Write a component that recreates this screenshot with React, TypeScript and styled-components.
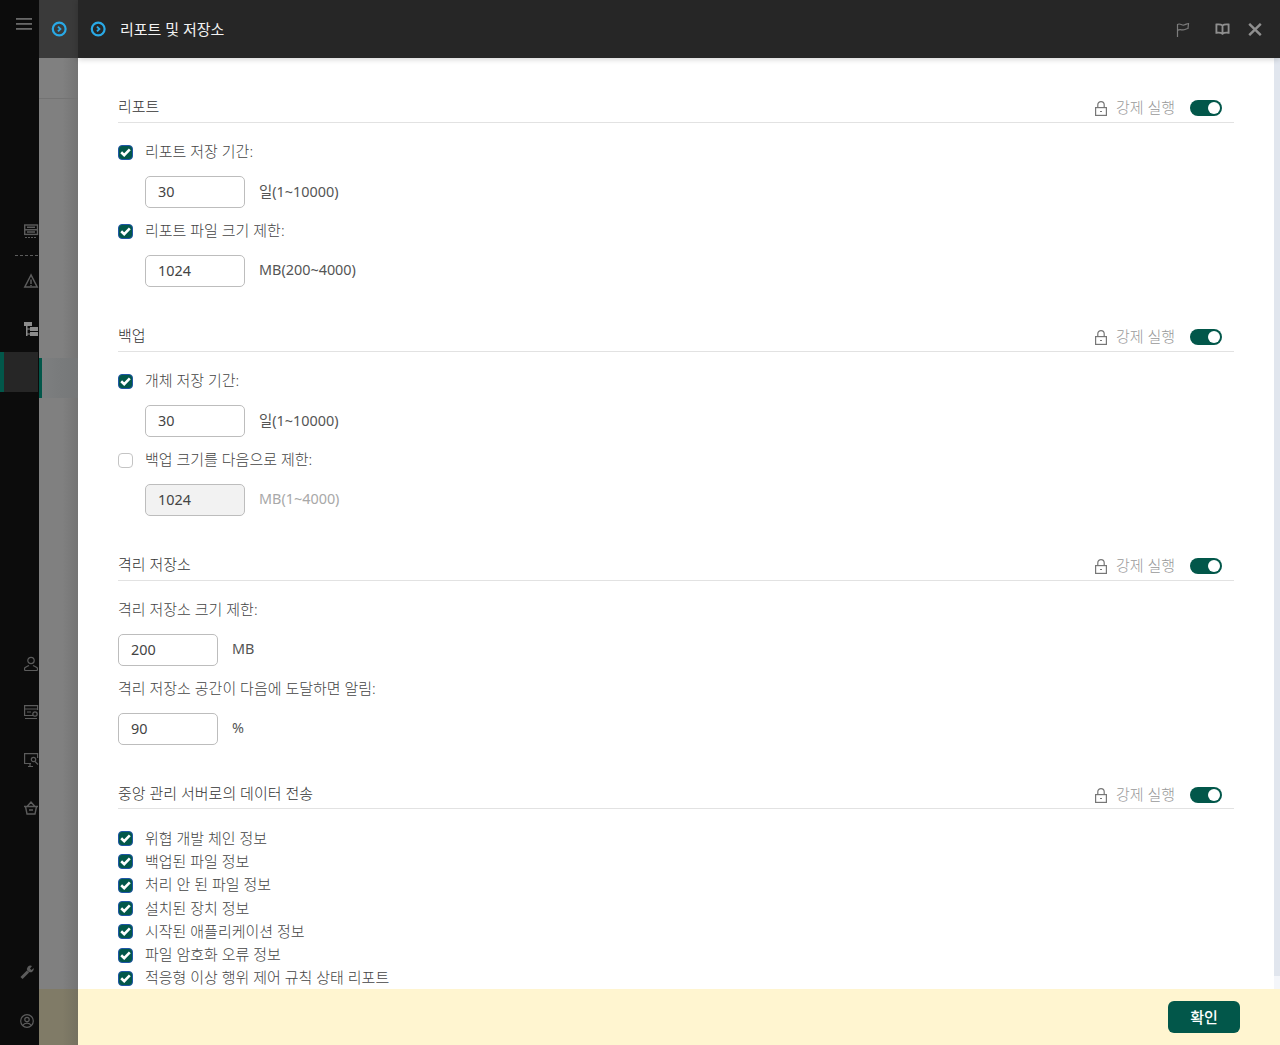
// App.tsx
import React from "react";
import styled, { createGlobalStyle } from "styled-components";

const GlobalStyle = createGlobalStyle`
  html, body {
    margin: 0;
    padding: 0;
    height: 100%;
    overflow: hidden;
    background: #0d0d0d;
  }
  body {
    font-family: "Noto Sans", "Noto Sans CJK KR", sans-serif;
    font-size: 15px;
  }
`;

const Page = styled.div`
  display: flex;
  width: 1280px;
  height: 1045px;
  overflow: hidden;
`;

/* left rail */
const Rail = styled.nav`
  width: 39px;
  flex: none;
  display: flex;
  flex-direction: column;
  background: #0c0c0c;
  color: #5c5c5c;
`;

const RailTop = styled.div`
  height: 48px;
  padding-left: 16px;
  display: flex;
  align-items: center;
  color: #686868;
`;

const RailGroup = styled.div<{ $top: number }>`
  display: flex;
  flex-direction: column;
  margin-top: ${(p) => p.$top}px;
  gap: 8px;
`;

const RailItem = styled.div<{ $active?: boolean; $left?: number }>`
  height: 40px;
  box-sizing: border-box;
  padding-left: ${(p) => p.$left ?? 24}px;
  margin-top: ${(p) => (p.$active ? -5 : 0)}px;
  display: flex;
  align-items: center;
  background: ${(p) => (p.$active ? "#262626" : "transparent")};
  border-left: ${(p) => (p.$active ? "4px solid #02574a" : "none")};
  width: ${(p) => (p.$active ? 38 : 39)}px;
`;

const RailDivider = styled.div`
  width: 23px;
  margin: -3px 0 -3px 15px;
  border-top: 1px dashed #5c5c5c;
`;

const RailBottom = styled(RailGroup)`
  margin-top: auto;
  padding-bottom: 4px;
  gap: 9px;
`;

/* dimmed panel behind the drawer */
const Underlay = styled.div`
  width: 39px;
  flex: none;
  display: flex;
  flex-direction: column;
  background: linear-gradient(to right, #808080 0, #808080 60%, #747474 100%);
`;

const UnderlayHead = styled.div`
  height: 58px;
  flex: none;
  display: flex;
  align-items: center;
  justify-content: center;
  background: #3a3a3a;
`;

const UnderlayRow = styled.div`
  height: 41px;
  flex: none;
  box-sizing: border-box;
  border-bottom: 1px solid #737373;
`;

const UnderlayActive = styled.div`
  height: 40px;
  flex: none;
  margin-top: 259px;
  background: linear-gradient(to right, #7d7f80, #757778);
  border-left: 3px solid #02574a;
`;

const UnderlayFoot = styled.div`
  height: 56px;
  flex: none;
  margin-top: auto;
  background: linear-gradient(to right, #807b67 0, #807b67 60%, #757160 100%);
`;

/* drawer */
const Drawer = styled.main`
  flex: 1;
  min-width: 0;
  display: flex;
  flex-direction: column;
  background: #fff;
`;

const DrawerHead = styled.header`
  height: 58px;
  flex: none;
  display: flex;
  align-items: center;
  padding: 0 18px 0 12px;
  background: #262626;
  box-shadow: 0 1px 6px rgba(0, 0, 0, 0.2);
  position: relative;
  z-index: 1;
`;

const DrawerTitle = styled.h1`
  margin: 0 0 0 14px;
  padding-bottom: 1px;
  font-size: 15px;
  font-weight: 400;
  color: #f2f2f2;
`;

const HeadIcons = styled.div`
  margin-left: auto;
  display: flex;
  align-items: center;
  color: #8f8f8f;
`;

const HeadIcon = styled.span<{ $gap: number; $dim?: boolean }>`
  display: flex;
  margin-left: ${(p) => p.$gap}px;
  color: ${(p) => (p.$dim ? "#7c7c7c" : "inherit")};
`;

const ScrollArea = styled.div`
  flex: 1;
  min-height: 0;
  position: relative;
  overflow: hidden;
  padding: 32px 46px 0 40px;
`;

const ScrollThumb = styled.div`
  position: absolute;
  top: 0;
  right: 0;
  bottom: 0;
  width: 6px;
  background: #f4f6fa;

  &::before {
    content: "";
    display: block;
    height: 918px;
    background: #e1e6ee;
  }
`;

const Section = styled.section`
  margin-bottom: 32px;
`;

const SectionHead = styled.div<{ $short?: boolean }>`
  height: ${(p) => (p.$short ? 32 : 33)}px;
  box-sizing: border-box;
  display: flex;
  align-items: flex-start;
  padding: 7px 12px 0 0;
  border-bottom: 1px solid #e2e2e2;
`;

const SectionTitle = styled.h2`
  margin: 0;
  font-size: 15px;
  line-height: 18px;
  font-weight: 300;
  color: #333;
`;

const Enforce = styled.div`
  margin: 1px 0 0 auto;
  display: flex;
  align-items: center;
  height: 20px;
  color: #999;
  font-weight: 300;
`;

const EnforceText = styled.span`
  margin: 0 15px 0 9px;
  padding-bottom: 3px;
`;

const Toggle = styled.span`
  width: 32px;
  height: 16px;
  border-radius: 8px;
  background: #02574a;
  position: relative;

  &::after {
    content: "";
    position: absolute;
    top: 2px;
    right: 2px;
    width: 12px;
    height: 12px;
    border-radius: 50%;
    background: #fff;
  }
`;

const Body = styled.div`
  padding-top: 19px;
`;

const Row = styled.div`
  height: 20px;
  display: flex;
  align-items: center;
  color: #444;
`;

const RowText = styled.span`
  padding-bottom: 3px;
  font-weight: 300;
`;

const Check = styled.span<{ $on?: boolean }>`
  width: 15px;
  height: 15px;
  flex: none;
  margin-right: 12px;
  box-sizing: border-box;
  border-radius: 4px;
  display: flex;
  align-items: center;
  justify-content: center;
  background: ${(p) => (p.$on ? "#02574a" : "#fff")};
  border: 1px solid ${(p) => (p.$on ? "#2056a8" : "#c4c4c4")};
`;

const FieldRow = styled.div<{ $indent?: boolean }>`
  display: flex;
  align-items: center;
  margin: 14px 0 13px;
  padding-left: ${(p) => (p.$indent ? 27 : 0)}px;

  &:last-child {
    margin-bottom: 0;
  }
`;

const Field = styled.div<{ $disabled?: boolean }>`
  width: 100px;
  height: 32px;
  box-sizing: border-box;
  padding: 0 0 2px 12px;
  border: 1px solid #bdbdbd;
  border-radius: 5px;
  display: flex;
  align-items: center;
  font-size: 14.4px;
  color: #444;
  background: ${(p) => (p.$disabled ? "#f2f2f2" : "#fff")};
`;

const Unit = styled.span<{ $disabled?: boolean }>`
  margin-left: 14px;
  padding-bottom: 4px;
  font-size: 14.4px;
  color: ${(p) => (p.$disabled ? "#a8a8a8" : "#555")};
`;

const List = styled.div`
  padding-top: 18px;
`;

const ListRow = styled.div`
  height: 23.3px;
  display: flex;
  align-items: center;
  color: #444;
`;

const Footer = styled.footer`
  height: 56px;
  flex: none;
  display: flex;
  align-items: center;
  justify-content: flex-end;
  padding-right: 40px;
  background: #fff5d0;
`;

const Confirm = styled.button`
  width: 72px;
  height: 32px;
  padding: 0 0 2px;
  border: none;
  border-radius: 6px;
  background: #02574a;
  color: #fff;
  font: inherit;
  font-weight: 500;
`;

const Tick = () => (
  <svg width="11" height="9" viewBox="0 0 11 9">
    <path d="M1.2 4.300 4.200 7.200 9.800 1.400" fill="none" stroke="#fff" strokeWidth="2.600" />
  </svg>
);

const CircleChevron = () => (
  <svg width="16" height="16" viewBox="0 0 16 16" fill="none" stroke="#29a9e6">
    <circle cx="8.200" cy="8" r="6.400" strokeWidth="2.200" />
    <path d="M7 5.600 9.400 8 7 10.400" strokeWidth="1.900" />
  </svg>
);

const LockIcon = () => (
  <svg width="12" height="15" viewBox="0 0 12 15" fill="none" stroke="#777" strokeWidth="1.200">
    <rect x="0.600" y="6.600" width="10.800" height="7.800" />
    <path d="M2.800 6.600V3.800a3.200 3.200 0 0 1 6.400 0V6.600" />
    <path d="M5 10.500h2" />
  </svg>
);

const Flag = () => (
  <svg width="14" height="15" viewBox="0 0 14 15" fill="none" stroke="currentColor" strokeWidth="1.200">
    <path d="M1.500 15V2.500C4 .8 5.500 3.500 8 3c2-.4 3-1.500 4.500-1.500L12 6.500c-2 .2-3 1.300-5 1.400C5 8 3.500 7 1.500 8.500" />
  </svg>
);

const Book = () => (
  <svg width="15" height="12" viewBox="0 0 16 12" fill="none" stroke="currentColor" strokeWidth="2">
    <path d="M8 2.200C6.500 1 4 .9 1.500 1.200V10c2.500-.3 5-.2 6.500 1 1.500-1.200 4-1.300 6.500-1V1.200C12 .9 9.500 1 8 2.200Zm0 0V11" />
  </svg>
);

const Close = () => (
  <svg width="14" height="13" viewBox="0 0 14 13" stroke="currentColor" strokeWidth="2.400">
    <path d="M1.200 .8 12.800 12.200M12.800 .8 1.200 12.200" />
  </svg>
);

const Burger = () => (
  <svg width="16" height="12" viewBox="0 0 16 12" fill="currentColor">
    <rect y="0" width="16" height="1.800" />
    <rect y="5" width="16" height="1.800" />
    <rect y="10" width="16" height="1.800" />
  </svg>
);

const RailSvg = ({ children }: { children: React.ReactNode }) => (
  <svg width="14" height="16" viewBox="0 0 14 16" fill="none" stroke="currentColor" strokeWidth="1.200" overflow="visible">
    {children}
  </svg>
);

const Enforced = () => (
  <Enforce>
    <LockIcon />
    <EnforceText>강제 실행</EnforceText>
    <Toggle />
  </Enforce>
);

const CheckRow = ({ on = true, children }: { on?: boolean; children: React.ReactNode }) => (
  <Row>
    <Check $on={on}>{on && <Tick />}</Check>
    <RowText>{children}</RowText>
  </Row>
);

const dataItems = [
  "위협 개발 체인 정보",
  "백업된 파일 정보",
  "처리 안 된 파일 정보",
  "설치된 장치 정보",
  "시작된 애플리케이션 정보",
  "파일 암호화 오류 정보",
  "적응형 이상 행위 제어 규칙 상태 리포트",
];

export default function App() {
  return (
    <Page>
      <GlobalStyle />
      <Rail>
        <RailTop>
          <Burger />
        </RailTop>
        <RailGroup $top={162}>
          <RailItem>
            <RailSvg>
              <rect x="0.700" y="3" width="12.800" height="9.400" strokeWidth="1.400" />
              <path d="M.7 7.700h12.800M3 5.300h8M3 10h8" strokeWidth="1.400" />
              <path d="M1 15.500h12" strokeDasharray="2 1" />
            </RailSvg>
          </RailItem>
          <RailDivider />
          <RailItem>
            <RailSvg>
              <path d="M7 2 .8 14h12.400ZM7 6.500V11M7 12v1" strokeWidth="1.500" />
            </RailSvg>
          </RailItem>
          <RailItem>
            <svg width="14" height="16" viewBox="0 0 14 16" fill="#8c8c8c">
              <rect x="0" y="1" width="8" height="4" />
              <rect x="2" y="5" width="1.500" height="10" />
              <rect x="3" y="7.500" width="3" height="1" />
              <rect x="3" y="12.500" width="3" height="1" />
              <rect x="6" y="6" width="8" height="4" />
              <rect x="6" y="11" width="8" height="4" />
            </svg>
          </RailItem>
          <RailItem $active />
        </RailGroup>
        <RailGroup $top={252}>
          <RailItem>
            <RailSvg>
              <circle cx="7" cy="4.500" r="3.200" />
              <path d="M.6 14.500v-2.500c2-1.500 3.500-2 4.400-2.600M13.400 14.500v-2.500c-2-1.500-3.500-2-4.400-2.600M.6 14.500h12.800" />
            </RailSvg>
          </RailItem>
          <RailItem>
            <RailSvg>
              <path d="M9 11.500H.6V1.600h13V6M.6 5h13M3 8h4M1 14.500h12" />
              <circle cx="11" cy="10" r="2.200" />
            </RailSvg>
          </RailItem>
          <RailItem>
            <RailSvg>
              <path d="M7 11.500H.6V1.600h13V6M4 14.500h5M6 11.500v3" />
              <circle cx="9.500" cy="7.500" r="2.200" />
              <path d="M11 9.500l3 3" />
            </RailSvg>
          </RailItem>
          <RailItem>
            <RailSvg>
              <path d="M0 6.500h14M1.500 6.500l1.500 7.500h8l1.500-7.500M3.500 6l3.500-4 3.500 4M5 10h4" strokeWidth="1.400" />
            </RailSvg>
          </RailItem>
        </RailGroup>
        <RailBottom $top={0}>
          <RailItem $left={20}>
            <RailSvg>
              <path d="M1.500 14 8 7.500" strokeWidth="3" />
              <path d="M7.500 7a3.500 3.500 0 0 1 4.500-5L10 4.500l1.500 1.500 2.200-2A3.500 3.500 0 0 1 9 8Z" fill="currentColor" stroke="none" />
            </RailSvg>
          </RailItem>
          <RailItem $left={20}>
            <RailSvg>
              <circle cx="7" cy="8" r="6.300" />
              <circle cx="7" cy="6.500" r="2.200" />
              <path d="M2.800 12.500c1-1.800 2.500-2.300 4.200-2.300s3.200.5 4.200 2.300" />
            </RailSvg>
          </RailItem>
        </RailBottom>
      </Rail>

      <Underlay>
        <UnderlayHead>
          <CircleChevron />
        </UnderlayHead>
        <UnderlayRow />
        <UnderlayActive />
        <UnderlayFoot />
      </Underlay>

      <Drawer>
        <DrawerHead>
          <CircleChevron />
          <DrawerTitle>리포트 및 저장소</DrawerTitle>
          <HeadIcons>
            <HeadIcon $gap={0} $dim>
              <Flag />
            </HeadIcon>
            <HeadIcon $gap={25}>
              <Book />
            </HeadIcon>
            <HeadIcon $gap={18}>
              <Close />
            </HeadIcon>
          </HeadIcons>
        </DrawerHead>

        <ScrollArea>
          <Section>
            <SectionHead>
              <SectionTitle>리포트</SectionTitle>
              <Enforced />
            </SectionHead>
            <Body>
              <CheckRow>리포트 저장 기간:</CheckRow>
              <FieldRow $indent>
                <Field>30</Field>
                <Unit>일(1~10000)</Unit>
              </FieldRow>
              <CheckRow>리포트 파일 크기 제한:</CheckRow>
              <FieldRow $indent>
                <Field>1024</Field>
                <Unit>MB(200~4000)</Unit>
              </FieldRow>
            </Body>
          </Section>

          <Section>
            <SectionHead>
              <SectionTitle>백업</SectionTitle>
              <Enforced />
            </SectionHead>
            <Body>
              <CheckRow>개체 저장 기간:</CheckRow>
              <FieldRow $indent>
                <Field>30</Field>
                <Unit>일(1~10000)</Unit>
              </FieldRow>
              <CheckRow on={false}>백업 크기를 다음으로 제한:</CheckRow>
              <FieldRow $indent>
                <Field $disabled>1024</Field>
                <Unit $disabled>MB(1~4000)</Unit>
              </FieldRow>
            </Body>
          </Section>

          <Section>
            <SectionHead>
              <SectionTitle>격리 저장소</SectionTitle>
              <Enforced />
            </SectionHead>
            <Body>
              <Row>
                <RowText>격리 저장소 크기 제한:</RowText>
              </Row>
              <FieldRow>
                <Field>200</Field>
                <Unit>MB</Unit>
              </FieldRow>
              <Row>
                <RowText>격리 저장소 공간이 다음에 도달하면 알림:</RowText>
              </Row>
              <FieldRow>
                <Field>90</Field>
                <Unit>%</Unit>
              </FieldRow>
            </Body>
          </Section>

          <Section>
            <SectionHead $short>
              <SectionTitle>중앙 관리 서버로의 데이터 전송</SectionTitle>
              <Enforced />
            </SectionHead>
            <List>
              {dataItems.map((item) => (
                <ListRow key={item}>
                  <Check $on>
                    <Tick />
                  </Check>
                  <RowText>{item}</RowText>
                </ListRow>
              ))}
            </List>
          </Section>
          <ScrollThumb />
        </ScrollArea>

        <Footer>
          <Confirm>확인</Confirm>
        </Footer>
      </Drawer>
    </Page>
  );
}
